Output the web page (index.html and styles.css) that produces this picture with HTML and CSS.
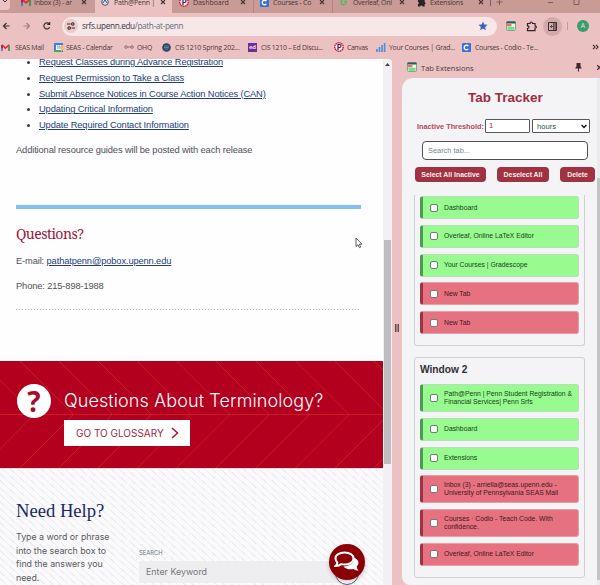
FILE: index.html
```html
<!DOCTYPE html>
<html lang="en">
<head>
<meta charset="utf-8">
<title>Path@Penn</title>
<link rel="stylesheet" href="styles.css">
</head>
<body>
<svg width="0" height="0" class="defs" aria-hidden="true">
  <defs>
    <symbol id="gmail" viewBox="0 0 10 8"><path d="M0 1v7h2V3.500z" fill="#4285d6"/><path d="M10 1v7H8V3.500z" fill="#2e9e55"/><path d="M0 1.500 1.300.4 5 3.500 8.700.4 10 1.500 5 6z" fill="#d8303a"/><path d="M0 1.500V4l2 1.500V1z" fill="#b8203a"/></symbol>
    <symbol id="penn" viewBox="0 0 10 10"><circle cx="5" cy="5" r="4.300" fill="#fbe9ec" stroke="#c4203c" stroke-width="1.400" stroke-dasharray="1.500 .5"/><path d="M4 8V2.500h1.500a1.400 1.400 0 0 1 0 3H4" fill="none" stroke="#3c2350" stroke-width="1.200"/></symbol>
    <symbol id="codio" viewBox="0 0 10 10"><rect width="10" height="10" rx="1" fill="#3871dc"/><path d="M7 3.500A2.500 2.500 0 1 0 7 6.500" fill="none" stroke="#fff" stroke-width="1.500"/></symbol>
    <symbol id="puzzle" viewBox="0 0 10 10"><path d="M1 2h2.500a1.300 1.300 0 0 1 2.600 0H8.500v2.500a1.300 1.300 0 0 1 0 2.500v2.500H6a1.200 1.200 0 0 0-2.400 0H1V6.800a1.200 1.200 0 0 0 0-2.400z"/></symbol>
    <symbol id="calendar" viewBox="0 0 10 10"><rect x=".5" y=".5" width="9" height="9" rx="1" fill="#f0f5ec" stroke="#6d8f80" stroke-width=".8"/><path d="M.5.5h9v2h-9z" fill="#2f5b50"/><path d="M1 3h4.500v2.300H1z" fill="#e2717a"/><path d="M1.500 5.800h7v3h-7z" fill="#6fdf85"/></symbol>
    <symbol id="cross" viewBox="0 0 6 6"><path d="m1 1 4 4m0-4L1 5" stroke="#46302f" stroke-width="1.100"/></symbol>
  </defs>
</svg>

<header class="browser">
  <div class="tabs">
    <div class="tab-search"><svg width="6" height="4" viewBox="0 0 6 4"><path d="m1 0 2 2 2-2" fill="none" stroke="#4a3433"/></svg></div>
    <div class="tab t-inbox"><svg width="10" height="8"><use href="#gmail"/></svg><span>Inbox (3) - ar</span><svg class="x" width="6" height="6"><use href="#cross"/></svg></div>
    <div class="tab active t-path"><svg width="8" height="8" viewBox="0 0 8 8"><circle cx="4" cy="4" r="3.300" fill="#dfe3ef" stroke="#3e5375"/><path d="m2 5 2-3 2 3" fill="none" stroke="#3e5375"/></svg><span>Path@Penn |</span><svg class="x" width="6" height="6"><use href="#cross"/></svg></div>
    <div class="tab t-dash"><svg width="10" height="10"><use href="#penn"/></svg><span>Dashboard</span><svg class="x" width="6" height="6"><use href="#cross"/></svg></div>
    <div class="tab t-cod"><svg width="9" height="9"><use href="#codio"/></svg><span>Courses - Co</span><svg class="x" width="6" height="6"><use href="#cross"/></svg></div>
    <div class="tab t-over"><svg width="8" height="8" viewBox="0 0 8 8"><path d="M3 1.500a2.600 2.600 0 1 0 3 1.500L4 4" fill="none" stroke="#45b85b" stroke-width="1.200"/></svg><span>Overleaf, Onl</span><svg class="x" width="6" height="6"><use href="#cross"/></svg></div>
    <div class="tab t-ext"><svg width="9" height="9"><use href="#puzzle" fill="#2c2222"/></svg><span>Extensions</span><svg class="x" width="6" height="6"><use href="#cross"/></svg></div>
    <svg class="window-controls" width="110" height="13" viewBox="490 0 110 13"><path d="M490.500 0v6M496.500 2h6M499.500 0v5M548 2.500h5M574 0v4.500h5V0" fill="none" stroke="#7c5f5c"/></svg>
  </div>
  <div class="toolbar">
    <svg class="nav" width="62" height="26" viewBox="0 13 62 26" fill="none" stroke="#3e2f30" stroke-width="1.200"><path d="M9.500 26H3.500m3-3-3 3 3 3"/><path d="M23.500 26h6m-3-3 3 3-3 3" stroke="#a08083"/><path d="M49.200 24a3 3 0 1 0 .4 3.200M49.700 22v2.500h-2.500"/></svg>
    <div class="address">
      <div class="site"><svg width="8" height="8" viewBox="0 0 8 8" fill="none" stroke="#362a2b" stroke-width="1.100"><path d="M0 2h3.500M4.500 6H8"/><circle cx="5.800" cy="2" r="1.200"/><circle cx="2.200" cy="6" r="1.200"/></svg></div>
      <span class="url">srfs.upenn.edu<i>/path-at-penn</i></span>
      <svg width="10" height="10" viewBox="0 0 10 10" fill="#3563c5"><path d="m5 .5 1.300 3 3.300.3L7.100 6l.8 3.300L5 7.500 2.100 9.300 2.900 6 .4 3.800l3.300-.3z"/></svg>
    </div>
    <svg class="ext-icon" width="10" height="10"><use href="#calendar"/></svg>
    <svg class="ext-puzzle" width="11" height="11" viewBox="0 0 11 11"><path d="M1.500 2.500H4q0-1.500 1.200-1.500T6.500 2.500H9v2.300q1.300 0 1.300 1.200T9 7.200v2.500H1.500V7.500q1.500-.2 1.500-1.400T1.500 4.800z" fill="none" stroke="#2e2424" stroke-width="1.200"/></svg>
    <div class="side-toggle"><svg width="9" height="9" viewBox="0 0 9 9" fill="none" stroke="#3c2e30"><path d="M.5.5h8v8h-8zM5.800.5v8"/><path d="M7.200 1v7" stroke-width=".8"/><path d="M2 4.500h2.500M3 3l1.500 1.500L3 6" stroke-width=".8"/></svg></div>
    <div class="divider"></div>
    <div class="avatar">A</div>
  </div>
  <nav class="bookmarks">
    <a class="b1"><svg width="9" height="7"><use href="#gmail"/></svg><span>SEAS Mail</span></a>
    <a class="b2"><svg width="9" height="9" viewBox="0 0 9 9"><path d="M0 0h9v9H0z" fill="#3e7ed8"/><path d="M7 2h2v5l-2 2z" fill="#f1bd43"/><path d="M0 7h7v2H0z" fill="#43a666"/><path d="M2 2h5v5H2z" fill="#f6f8ff"/><path d="M3 3h1v3M5 3h1v3" stroke="#3e7ed8" stroke-width=".7" fill="none"/></svg><span>SEAS - Calendar</span></a>
    <a class="b3"><svg width="10" height="6" viewBox="0 0 10 6" fill="none" stroke="#8b6d75"><circle cx="2" cy="3" r="1.300"/><circle cx="8" cy="3" r="1.300"/><path d="M3.500 3h3"/></svg><span>OHQ</span></a>
    <a class="b4"><svg width="9" height="9" viewBox="0 0 9 9"><circle cx="4.500" cy="4.500" r="4.300" fill="#28445f"/><path d="M2 3h5M2 4.500h5M2.500 6h4" stroke="#7394ad" stroke-width=".8"/></svg><span>CIS 1210 Spring 202...</span></a>
    <a class="b5"><span class="ed">ed</span><span>CIS 1210 – Ed Discu...</span></a>
    <a class="b6"><svg width="10" height="10"><use href="#penn"/></svg><span>Canvas</span></a>
    <a class="b7"><svg width="10" height="9" viewBox="0 0 10 9" fill="#4b93d8"><path d="M0 6h1.700v3H0zM2.600 4h1.700v5H2.600zM5.200 2h1.700v7H5.200zM7.800 0h1.700v9H7.800z"/></svg><span>Your Courses | Grad...</span></a>
    <a class="b8"><svg width="9" height="9"><use href="#codio"/></svg><span>Courses - Codio - Te...</span></a>
    <svg class="more" width="7" height="6" viewBox="0 0 7 6"><path d="m1 .8 2 2.200-2 2.200M4 .8 6 3 4 5.200" fill="none" stroke="#342829" stroke-width="1.100"/></svg>
  </nav>
</header>

<div class="workspace">
  <main class="page">
    <section class="resources">
      <ul>
        <li><a>Request Classes during Advance Registration</a></li>
        <li><a>Request Permission to Take a Class</a></li>
        <li><a>Submit Absence Notices in Course Action Notices (CAN)</a></li>
        <li><a>Updating Critical Information</a></li>
        <li><a>Update Required Contact Information</a></li>
      </ul>
      <p class="note">Additional resource guides will be posted with each release</p>
      <div class="blue-rule"></div>
      <h2>Questions?</h2>
      <p class="mail">E-mail: <a>pathatpenn@pobox.upenn.edu</a></p>
      <p class="phone">Phone: 215-898-1988</p>
      <div class="dots"></div>
    </section>
    <section class="glossary">
      <svg class="chevrons" width="383" height="107" viewBox="0 0 383 107" fill="none" stroke="#d3202a" stroke-width=".8"><path d="M0 53.500h383M-19.300 0l53.500 53.500L-19.300 107M20 0l53.500 53.500L20 107M59 0l53.500 53.500L59 107M98 0l53.500 53.500L98 107M137.300 0l53.500 53.500L137.300 107M176.500 0l53.500 53.500L176.500 107M216 0l53.500 53.500L216 107M256 0l53.500 53.500L256 107M295.500 0l53.500 53.500L295.500 107M335 0l53.500 53.500L335 107M374 0l53.500 53.500L374 107"/></svg>
      <div class="q-badge">?</div>
      <div class="glossary-body">
        <h3>Questions About Terminology?</h3>
        <a class="go"><span>GO TO GLOSSARY</span><svg width="8" height="12" viewBox="0 0 8 12"><path d="m1 1 5.500 5L1 11" fill="none" stroke="#9e1834" stroke-width="1.500"/></svg></a>
      </div>
    </section>
    <section class="help">
      <div class="help-text">
        <h2>Need Help?</h2>
        <p>Type a word or phrase<br>into the search box to<br>find the answers you<br>need.</p>
      </div>
      <div class="help-search">
        <label>SEARCH</label>
        <div class="keyword">Enter Keyword</div>
      </div>
    </section>
    <div class="chat-ring"></div>
    <div class="chat"><svg width="26" height="22" viewBox="0 0 26 22"><path d="M19.500 6.500c5.200 1.500 6.500 6.200 3.200 9 .1 1.800.8 2.900 2 4-2.100.1-3.700-.5-4.900-1.600-4.300 1-8.500-.1-10.300-2.500 6.200 0 11-3.500 10-8.900z" fill="#fff"/><path d="M10.500 1.500c5.200 0 9 2.500 9 6s-3.800 6-9 6q-1.700 0-3.200-.4C6 14.300 4 15 1.500 15c1.100-1 1.800-2.100 1.900-3.500C2.200 10.500 1.500 9 1.500 7.500c0-3.500 3.800-6 9-6z" fill="#8b0007" stroke="#fff" stroke-width="2"/></svg></div>
    <svg class="pointer" width="8" height="12" viewBox="0 0 8 12"><path d="M1 1v8.500l2-1.800 1.400 3 1.300-.6-1.300-2.900H7z" fill="#fff" stroke="#4a4a50" stroke-width=".9"/></svg>
  </main>
  <div class="page-scroll"><svg width="5" height="3" viewBox="0 0 5 3"><path d="M0 3 2.500 0 5 3z" fill="#444"/></svg><div class="thumb"></div></div>
  <div class="splitter"><div class="grip"></div></div>
  <aside class="panel">
    <div class="panel-head">
      <svg width="10" height="10"><use href="#calendar"/></svg><span>Tab Extensions</span>
      <svg class="pin" width="7" height="9" viewBox="0 0 7 9"><path d="M1.500 0h4v3.500l1 1v1H4V8.500H3v-3H.5v-1l1-1z" fill="#3a2c2e"/></svg>
      <svg width="7" height="7" viewBox="0 0 6 6"><use href="#cross"/></svg>
    </div>
    <div class="panel-body">
      <div class="tracker">
        <h1>Tab Tracker</h1>
        <div class="threshold"><label>Inactive Threshold:</label><div class="number">1</div><div class="select"><span>hours</span><svg width="6" height="5" viewBox="0 0 6 5"><path d="m.6 1 2.400 2.400L5.400 1" fill="none" stroke="#111" stroke-width="1.400"/></svg></div></div>
        <div class="search">Search tab...</div>
        <div class="buttons"><button class="k1">Select All Inactive</button><button class="k2">Deselect All</button><button class="k3">Delete</button></div>
        <div class="windows">
          <div class="window first">
            <div class="item ok"><i></i><span>Dashboard</span></div>
            <div class="item ok"><i></i><span>Overleaf, Online LaTeX Editor</span></div>
            <div class="item ok"><i></i><span>Your Courses | Gradescope</span></div>
            <div class="item old"><i></i><span>New Tab</span></div>
            <div class="item old"><i></i><span>New Tab</span></div>
          </div>
          <div class="window second">
            <h2>Window 2</h2>
            <div class="item ok tall"><i></i><span>Path@Penn | Penn Student Registration &amp;<br>Financial Services| Penn Srfs</span></div>
            <div class="item ok"><i></i><span>Dashboard</span></div>
            <div class="item ok"><i></i><span>Extensions</span></div>
            <div class="item old tall"><i></i><span>Inbox (3) - arriella@seas.upenn.edu -<br>University of Pennsylvania SEAS Mail</span></div>
            <div class="item old tall"><i></i><span>Courses · Codio - Teach Code. With<br>confidence.</span></div>
            <div class="item old"><i></i><span>Overleaf, Online LaTeX Editor</span></div>
          </div>
        </div>
      </div>
      <div class="panel-scroll"><div class="thumb"></div></div>
    </div>
  </aside>
</div>
</body>
</html>
```
FILE: styles.css
```css
* { box-sizing: border-box; }
body, h1, h2, h3, p, ul { margin: 0; padding: 0; }
body {
  width: 600px;
  height: 585px;
  overflow: hidden;
  background: #ebc2c1;
  font-family: "Liberation Sans", sans-serif;
  display: flex;
  flex-direction: column;
}
svg { display: block; flex: none; }
.defs { position: absolute; }

/* browser chrome */
.browser { font-family: "Open Sans", sans-serif; color: #4e3738; flex: none; }
.tabs { height: 13px; display: flex; background: #c99b96; overflow: hidden; }
.tab-search { width: 10px; background: #ebc2c1; border-bottom-right-radius: 4px; height: 10px; padding-left: 2px; }
.tab { height: 13px; display: flex; align-items: center; padding-bottom: 9px; font-size: 7px; letter-spacing: -.22px; white-space: nowrap; }
.tab span { width: 40px; margin-left: 4px; flex: none; line-height: 12px; padding-top: 1px; }
.tab .x { margin-left: 6px; }
.tab.active { background: #ebc2c1; }
.t-inbox { width: 85px; padding-left: 11px; }
.t-inbox span { margin-left: 3px; }
.t-inbox .x { margin-left: 7px; }
.t-path { width: 77px; padding-left: 6px; }
.t-path span { margin-left: 5px; }
.t-dash { width: 81px; padding-left: 7px; }
.t-dash .x { margin-left: 7px; }
.t-dash span { letter-spacing: -.05px; }
.t-cod { width: 79px; padding-left: 6px; border-left: 1px solid #b48480; }
.t-over { width: 79px; padding-left: 7px; border-left: 1px solid #b48480; }
.t-over span { margin-left: 5px; letter-spacing: -.32px; }
.t-ext { width: 79px; padding-left: 6px; }
.t-ext .x { margin-left: 8px; }
.toolbar { height: 26px; display: flex; align-items: center; }
.address { width: 435px; height: 19px; border-radius: 10px; background: #f7e7e7; display: flex; align-items: center; padding: 0 9px 0 2px; }
.site { width: 14px; height: 14px; border-radius: 50%; background: #eccbcb; display: grid; place-items: center; }
.url { flex: 1; margin-left: 4px; font-size: 8.200px; letter-spacing: -.34px; color: #373943; line-height: 14px; }
.url i { font-style: normal; color: #666d80; }
.ext-icon { margin-left: 9px; }
.ext-puzzle { margin-left: 10px; }
.side-toggle { width: 19px; height: 19px; margin-left: 6px; border-radius: 50%; background: #d2aaab; display: grid; place-items: center; }
.divider { width: 1px; height: 8px; margin-left: 5px; background: #c59b9a; }
.avatar { width: 12px; height: 12px; margin-left: 9px; border-radius: 50%; background: #3e9b6d; color: #d5f0df; font-size: 7px; line-height: 12px; text-align: center; }
.bookmarks { height: 20px; padding-bottom: 4px; display: flex; align-items: center; font-size: 6.900px; letter-spacing: -.25px; color: #4e393b; white-space: nowrap; }
.bookmarks a { display: flex; align-items: center; gap: 4px; flex: none; }
.b1 { width: 53px; padding-left: 1px; }
.b1 span { margin-left: 1px; }
.b2 { width: 71px; padding-left: 1px; }
.bookmarks .b2 { gap: 3px; }
.b3 { width: 38px; }
.bookmarks .b3 { gap: 3px; }
.b4 { width: 86px; }
.b4 span { letter-spacing: -.2px; }
.b5 { width: 85px; }
.b6 { width: 43px; padding-left: 1px; }
.bookmarks .b7, .bookmarks .b6 { gap: 3px; }
.b6 span { letter-spacing: -.4px; }
.b7 { width: 86px; }
.b8 { width: 130px; }
.b8 span { letter-spacing: -.27px; }
.ed { width: 9px; height: 9px; background: #69309c; color: #f1cfe1; font-size: 6px; line-height: 8px; text-align: center; font-weight: 700; }

/* web page */
.workspace { flex: 1; display: flex; min-height: 0; }
.page { width: 383px; background: #fefdff; position: relative; overflow: hidden; height: 526px; flex: none; }
.resources { height: 302px; padding-left: 16px; font-size: 9.300px; letter-spacing: -.12px; color: #505057; overflow: hidden; }
.resources ul { margin: -5px 0 0; padding-left: 23px; }
.resources li { line-height: 16px; height: 15.800px; }
.resources li::marker { color: #3c3c50; font-size: 9px; }
.resources a { color: #233f74; text-decoration: underline; }
.note { margin-top: 9px; line-height: 16px; }
.blue-rule { margin-top: 47px; width: 345px; height: 4px; background: #82c0f4; }
.resources h2 { font: 400 14px/20px "Noto Serif", "Liberation Serif", serif; letter-spacing: -.52px; color: #a01535; margin-top: 15px; }
.mail { margin-top: 9px; line-height: 16px; }
.phone { margin-top: 9px; line-height: 16px; }
.dots { margin-top: 15px; width: 345px; height: 1px; background: repeating-linear-gradient(90deg, #bcb9bd 0 1px, transparent 1px 3px); }
.glossary { position: relative; height: 107px; background: #b2001e; display: flex; padding: 23px 0 0 17px; }
.chevrons { position: absolute; left: 0; top: 0; }
.q-badge { position: relative; width: 34px; height: 34px; border-radius: 50%; background: #fff; color: #a80b28; font: 700 28px/34px "Open Sans", sans-serif; text-align: center; }
.glossary-body { position: relative; margin-left: 13px; }
.glossary h3 { font: 300 18px/26px "Inter", sans-serif; letter-spacing: .09px; color: #fff; padding-top: 4px; white-space: nowrap; }
.go { display: flex; align-items: center; justify-content: space-between; width: 126px; height: 26px; margin-top: 6px; padding: 0 11px 0 12px; background: #fff; color: #9e2a40; font: 400 10px/14px "Inter", sans-serif; }
.help { height: 117px; display: flex; padding-left: 16px; background: #faf9fb repeating-linear-gradient(42deg, transparent 0 4.200px, #efedf0 4.200px 5.200px); border-top: 1px solid #e5dce2; font-family: "Inter", sans-serif; color: #5a5a61; }
.help-text { width: 123px; }
.help h2 { margin-top: 29px; font: 400 18.600px/26px "Liberation Serif", serif; color: #162a61; }
.help p { margin-top: 6px; font-size: 8.800px; line-height: 13.600px; white-space: nowrap; }
.help-search { flex: 1; }
.help-search label { display: block; margin-top: 79px; font-size: 5.800px; line-height: 10px; color: #6b7186; }
.keyword { width: 205px; height: 22px; margin-top: 3px; padding-left: 7px; background: #eeedef; font-size: 8.900px; line-height: 22px; color: #77777c; }
.chat { position: absolute; left: 329px; top: 485px; width: 36px; height: 36px; border-radius: 50%; background: #8b0007; display: grid; place-items: center; box-shadow: 0 2px 4px #0003; }
.chat-ring { position: absolute; left: 335px; top: 502px; width: 24px; height: 24px; border: 1px solid #545c7c; border-radius: 50%; background: #fff; }
.pointer { position: absolute; left: 355px; top: 178px; }
.page-scroll { width: 9px; background: #f1f0f2; border-top-right-radius: 4px; display: flex; flex-direction: column; align-items: center; padding-top: 4px; flex: none; }
.page-scroll .thumb { width: 7px; height: 224px; margin-top: 174px; background: #bdbcbe; }
.splitter { width: 10px; display: flex; align-items: center; justify-content: center; flex: none; }
.grip { width: 4px; height: 8px; border: solid #62494b; border-width: 0 1px; background: #a58485; margin-top: 12px; }

/* side panel */
.panel { width: 198px; }
.panel-head { height: 19px; display: flex; align-items: center; padding: 0 0 1px 5px; font: 500 7.500px/12px "Open Sans", sans-serif; color: #4d3a3c; }
.panel-head span { margin-left: 4px; flex: 1; padding-bottom: 1px; }
.panel-head .pin { margin-right: 14px; }
.panel-head svg { margin-bottom: 2px; }
.panel-head svg:last-child { margin-right: -3px; }
.panel-body { height: 507px; display: flex; background: #f4f3f5; border-top-left-radius: 11px; border-bottom-left-radius: 8px; overflow: hidden; }
.tracker { width: 195px; padding-left: 12px; flex: none; }
.panel-scroll { width: 3px; background: #ebeaec; padding-top: 100px; }
.panel-scroll .thumb { height: 402px; background: #c4c3c5; }
.tracker h1 { margin: 11px 0 0 54px; font-size: 13.500px; line-height: 18px; color: #a02c3d; white-space: nowrap; }
.threshold { display: flex; margin-top: 12px; height: 14px; padding-left: 3px; align-items: center; }
.threshold label { width: 68px; font-weight: 700; font-size: 7.300px; color: #b24c58; white-space: nowrap; }
.number { width: 45px; height: 14px; border: 1px solid #57575b; border-radius: 1px; background: #fff; padding-left: 3px; font-size: 7.600px; line-height: 12px; color: #a02c3d; }
.select { width: 58px; height: 14px; margin-left: 2px; border: 1px solid #57575b; border-radius: 1px; background: #fff; display: flex; justify-content: space-between; align-items: center; padding: 0 2px 0 4px; font-size: 7.600px; color: #31543c; }
.search { width: 166px; height: 19px; margin: 8px 0 0 8px; border: 1px solid #4e4e53; border-radius: 4px; background: #fff; padding-left: 5px; font-size: 7.400px; line-height: 17px; color: #77828b; }
.buttons { display: flex; margin: 7px 0 0 1px; }
.buttons button { height: 15px; padding: 0; border: 0; border-radius: 4px; background: #a03241; color: #f8edf0; font: 700 6.900px/15px "Liberation Sans", sans-serif; white-space: nowrap; }
.k1 { width: 71px; }
.buttons .k2 { width: 52px; margin-left: 11px; }
.buttons .k3 { width: 35px; margin-left: 11px; }
.windows { margin-top: 13px; }
.window { width: 171px; border: 1px solid #d0cfd2; border-radius: 3px; padding: 0 5px; background: #f4f3f5; }
.window.first { height: 151px; border-top: 0; border-radius: 0 0 3px 3px; padding-top: 1px; }
.window.second { height: 221px; margin-top: 11px; }
.window h2 { font-size: 10.200px; line-height: 14px; color: #303034; padding-top: 5px; margin-bottom: 7px; }
.item { width: 159px; height: 23px; margin-bottom: 5.800px; border: 1px solid #b9dcb9; border-left: 3px solid #4d9a52; border-radius: 3px; display: flex; align-items: center; font-size: 6.800px; line-height: 8px; white-space: nowrap; color: #17401c; }
.ok { background: #98fb8f; }
.item.old { background: #e6727f; border-color: #e0a0a8; border-left-color: #9c3543; color: #481522; }
.item.tall { height: 28px; }
.item i { width: 8px; height: 8px; margin: 0 6px 0 7px; border: 1px solid #77777a; border-radius: 2px; background: #fff; flex: none; }
```
